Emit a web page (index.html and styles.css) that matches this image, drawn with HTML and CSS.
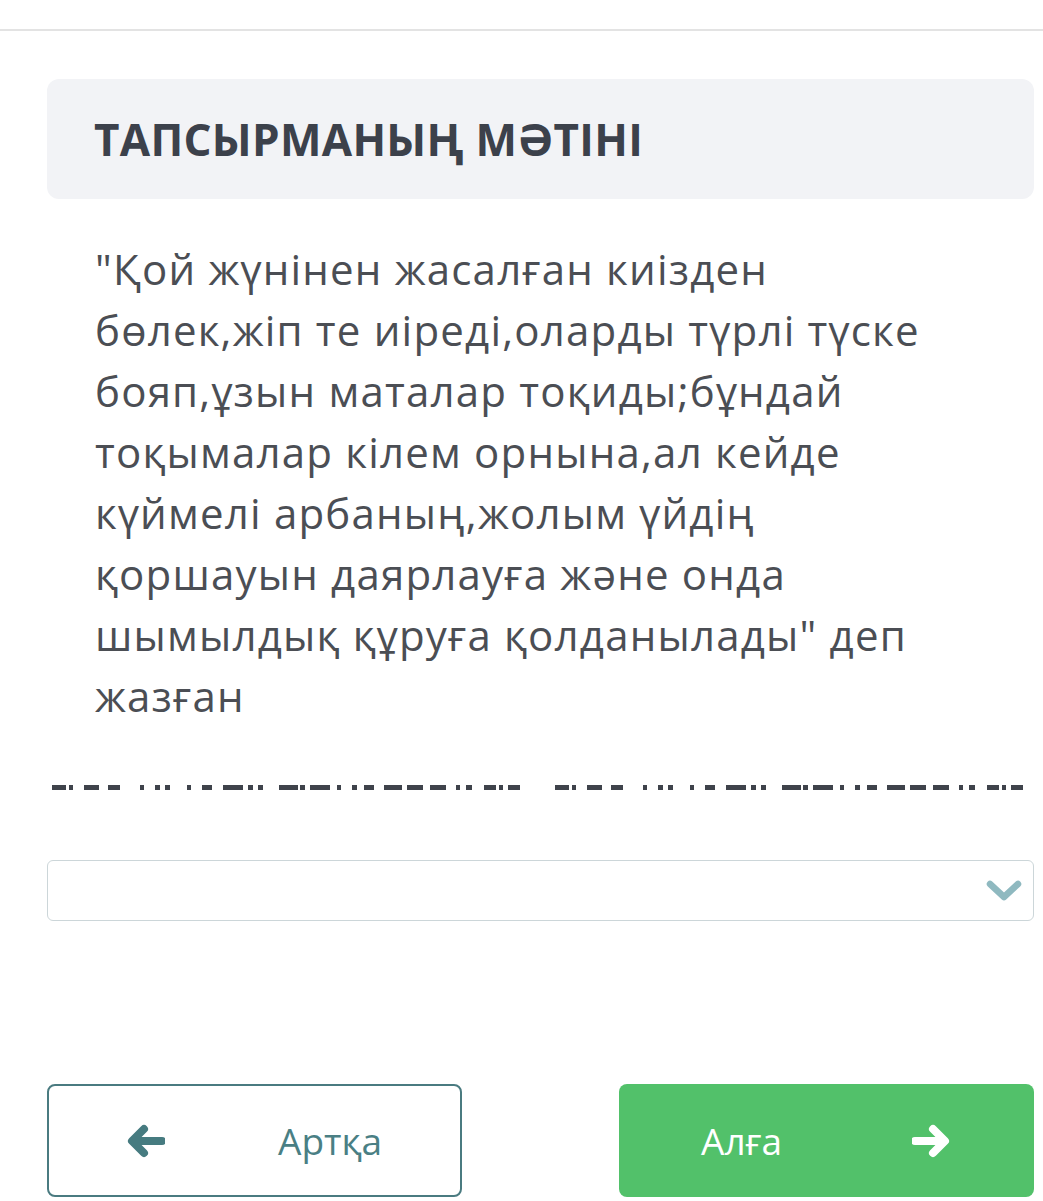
FILE: index.html
```html
<!DOCTYPE html>
<html>
<head>
    <title>Тапсырма</title>
    <meta charset="UTF-8">
    <meta name="viewport" content="width=device-width, initial-scale=1.0">
    <link rel="stylesheet" href="styles.css">
</head>
<body>
    <div class="topbar"></div>

    <div class="container">
        <div class="task-head">
            <h2>ТАПСЫРМАНЫҢ МӘТІНІ</h2>
        </div>

        <p class="task-text">"Қой жүнінен жасалған киізден бөлек,жіп те иіреді,оларды түрлі түске бояп,ұзын маталар тоқиды;бұндай тоқымалар кілем орнына,ал кейде күймелі арбаның,жолым үйдің қоршауын даярлауға және онда шымылдық құруға қолданылады" деп жазған</p>

        <div class="clipped-line">
            <div class="clip-half"></div>
            <div class="clip-half"></div>
        </div>

        <div class="answer-select">
            <svg class="chevron" width="36" height="24" viewBox="0 0 36 24">
                <path d="M4 5 L18 18 L32 5" fill="none" stroke="#8fb9c0" stroke-width="6.5" stroke-linecap="round" stroke-linejoin="round"/>
            </svg>
        </div>

        <div class="nav-buttons">
            <button class="btn btn-back">
                <svg width="38" height="34" viewBox="0 0 38 34">
                    <path d="M35 17 H6 M17 5 L5 17 L17 29" fill="none" stroke="#467b80" stroke-width="8" stroke-linecap="round" stroke-linejoin="round"/>
                </svg>
                <span>Артқа</span>
            </button>
            <button class="btn btn-next">
                <span>Алға</span>
                <svg width="38" height="34" viewBox="0 0 38 34">
                    <path d="M3 17 H32 M21 5 L33 17 L21 29" fill="none" stroke="#ffffff" stroke-width="8" stroke-linecap="round" stroke-linejoin="round"/>
                </svg>
            </button>
        </div>
    </div>
</body>
</html>
```

FILE: styles.css
```css
body {
    margin: 0;
    padding: 0;
    font-family: "Open Sans", "Noto Sans", sans-serif;
    background: #ffffff;
    color: #4a4d53;
}
.topbar {
    height: 29px;
    border-bottom: 2px solid #e3e3e3;
}
.container {
    padding: 48px 9px 0 47px;
}
.task-head {
    background: #f2f3f6;
    border-radius: 12px;
    height: 120px;
    display: flex;
    align-items: center;
    padding-left: 47px;
}
.task-head h2 {
    margin: 0;
    font-size: 44px;
    font-weight: 700;
    letter-spacing: 0.3px;
    color: #3c414b;
}
.task-text {
    margin: 39px 0 0 48px;
    width: 850px;
    font-size: 42px;
    line-height: 61px;
    letter-spacing: 1.2px;
    color: #4b4e54;
}
.clipped-line {
    display: flex;
    gap: 24px;
    margin: 59px 0 0 5px;
    height: 5px;
}
.clip-half {
    flex: 1;
    height: 5px;
    background: linear-gradient(to right,
        #3f434b 0 14px, transparent 14px 17px,
        #3f434b 17px 21px, transparent 21px 32px,
        #3f434b 32px 47px, transparent 47px 56px,
        #3f434b 56px 68px, transparent 68px 88px,
        #3f434b 88px 92px, transparent 92px 103px,
        #3f434b 103px 108px, transparent 108px 113px,
        #3f434b 113px 118px, transparent 118px 135px,
        #3f434b 135px 139px, transparent 139px 150px,
        #3f434b 150px 160px, transparent 160px 171px,
        #3f434b 171px 191px, transparent 191px 196px,
        #3f434b 196px 201px, transparent 201px 206px,
        #3f434b 206px 211px, transparent 211px 227px,
        #3f434b 227px 246px, transparent 246px 248px,
        #3f434b 248px 253px, transparent 253px 258px,
        #3f434b 258px 278px, transparent 278px 285px,
        #3f434b 285px 289px, transparent 289px 300px,
        #3f434b 300px 305px, transparent 305px 312px,
        #3f434b 312px 322px, transparent 322px 332px,
        #3f434b 332px 350px, transparent 350px 355px,
        #3f434b 355px 371px, transparent 371px 378px,
        #3f434b 378px 394px, transparent 394px 404px,
        #3f434b 404px 408px, transparent 408px 414px,
        #3f434b 414px 420px, transparent 420px 432px,
        #3f434b 432px 444px, transparent 444px 447px,
        #3f434b 447px 451px, transparent 451px 456px,
        #3f434b 456px 468px, transparent 468px);
}
.answer-select {
    margin-top: 70px;
    height: 59px;
    border: 1.5px solid #ccd6d9;
    border-radius: 6px;
    display: flex;
    align-items: center;
    justify-content: flex-end;
    padding-right: 11px;
}
.nav-buttons {
    margin-top: 163px;
    display: flex;
    justify-content: space-between;
}
.btn {
    width: 415px;
    height: 113px;
    border-radius: 8px;
    font-family: "Open Sans", "Noto Sans", sans-serif;
    font-size: 37px;
    display: flex;
    align-items: center;
    cursor: pointer;
}
.btn-back {
    background: #ffffff;
    border: 2px solid #4a7b80;
    color: #4a7f84;
    padding: 0 0 0 78px;
}
.btn-back span {
    margin-left: 113px;
}
.btn-next {
    background: #52c16a;
    border: none;
    color: #ffffff;
    padding: 0 0 0 82px;
}
.btn-next span {
    margin-right: 130px;
}
```
